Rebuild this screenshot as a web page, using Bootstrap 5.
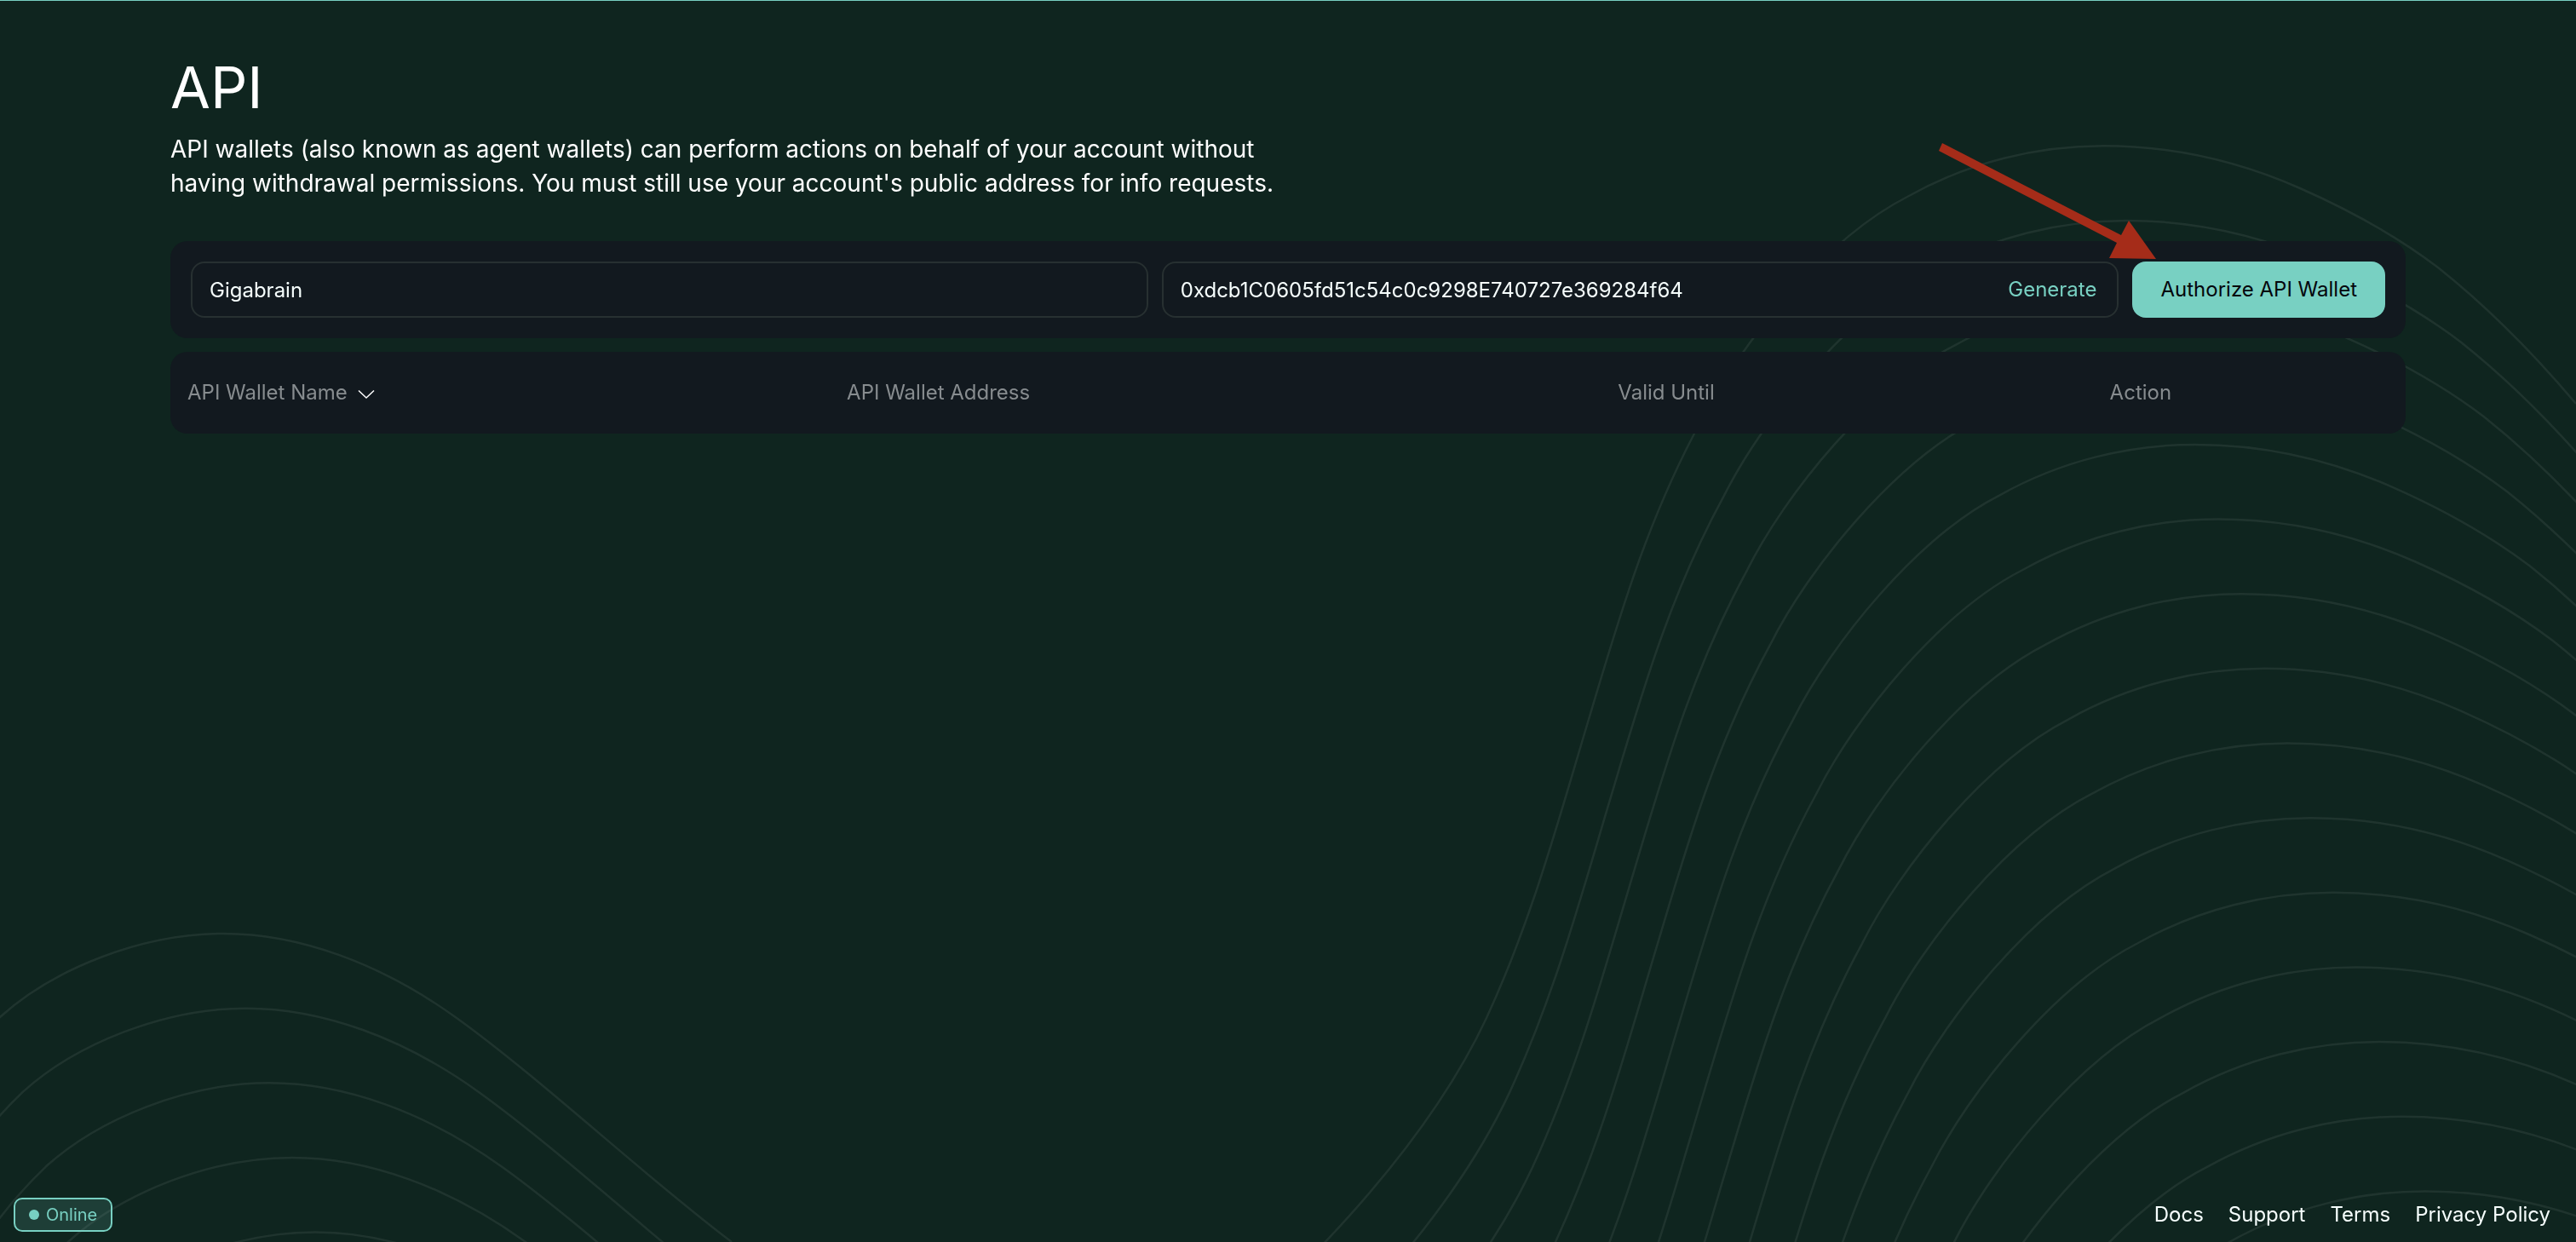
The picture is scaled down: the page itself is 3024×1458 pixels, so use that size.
<!DOCTYPE html>
<html lang="en">
<head>
<meta charset="utf-8">
<meta name="viewport" content="width=device-width, initial-scale=1">
<title>API</title>
<link href="https://cdn.jsdelivr.net/npm/bootstrap@5.3.0/dist/css/bootstrap.min.css" rel="stylesheet">
<style>
  :root { --mint: #78d0c2; --panel: #12191f; --ink: #f6fefd; --muted-ink: #878c8f; }
  body { background: #0f251f; color: #fff; font-family: Inter, "Liberation Sans", sans-serif; font-size: 24px; line-height: 32px; border-top: 1px solid var(--mint); }
  .backdrop { position: fixed; inset: 0; z-index: -1; }
  .page-main { padding: 60px 200px 0; }
  .page-title { font-size: 68px; line-height: 82px; font-weight: 400; margin-bottom: 12px; }
  .intro { font-size: 28px; line-height: 40px; max-width: 1312px; margin-bottom: 48px; }
  .panel { background: var(--panel); border-radius: 20px; }
  .wallet-form { padding: 24px; margin-bottom: 16px; }
  .field { height: 66px; border: 2px solid #273031; border-radius: 16px; padding: 0 20px; }
  .field input { background: transparent; border: 0; outline: 0; color: var(--ink); padding: 0; height: 100%; min-width: 0; }
  .generate { background: none; border: 0; color: var(--mint); padding: 0 4px; }
  .btn-authorize, .btn-authorize:hover { height: 66px; border: 0; border-radius: 16px; padding: 0 33px; background: var(--mint); color: #04060c; font-size: 24px; }
  .wallet-table { color: var(--muted-ink); table-layout: fixed; }
  .wallet-table th { font-weight: 400; padding: 32px 0 32px 20px; }
  .page-footer { padding: 0 30px 12px 16px; }
  .status { height: 40px; border: 2px solid var(--mint); border-radius: 10px; background: rgba(120, 208, 194, .15); color: var(--mint); padding: 0 16px; font-size: 20px; }
  .status-dot { width: 12px; height: 12px; background: var(--mint); }
  .footer-links { gap: 29px; }
  .footer-links a { color: var(--ink); text-decoration: none; }
  .callout-arrow { position: absolute; left: 0; bottom: 100%; width: 258px; height: 138px; margin: 0 0 2px -228px; pointer-events: none; }
</style>
<script src="https://cdn.jsdelivr.net/npm/bootstrap@5.3.0/dist/js/bootstrap.bundle.min.js"></script>
</head>
<body class="d-flex flex-column min-vh-100">

<svg class="backdrop w-100 h-100" viewBox="0 0 3024 1458" preserveAspectRatio="xMidYMid slice" fill="none" stroke="#fff" stroke-opacity=".07" stroke-width="2.5" aria-hidden="true">
  <defs>
    <path id="wave" d="M-60 1262C-42 1238-22 1215 0 1194C62 1138 165 1096 262 1096C350 1096 446 1130 536 1195C636 1267 759 1383 859 1458M1550 1464C1635 1375 1703 1285 1745 1195C1799 1078 1830 961 1865 844.500C1900 727.500 1933 611 1997 494C2042 404 2143 280 2239 231C2312 190 2392 171.300 2469 171.300C2546 171.300 2623 187 2700 221C2754 244.800 2808 273 2862 314C2916 357 2970 410 3024 474"/>
  </defs>
  <use href="#wave"/>
  <use href="#wave" x="27" y="87.650"/>
  <use href="#wave" x="54" y="175.300"/>
  <use href="#wave" x="81" y="262.950"/>
  <use href="#wave" x="108" y="350.600"/>
  <use href="#wave" x="135" y="438.250"/>
  <use href="#wave" x="162" y="525.900"/>
  <use href="#wave" x="189" y="613.550"/>
  <use href="#wave" x="216" y="701.200"/>
  <use href="#wave" x="243" y="788.850"/>
  <use href="#wave" x="270" y="876.500"/>
  <use href="#wave" x="297" y="964.150"/>
  <use href="#wave" x="324" y="1051.800"/>
  <use href="#wave" x="351" y="1139.450"/>
  <use href="#wave" x="378" y="1227.100"/>
</svg>

<main class="page-main">
  <h1 class="page-title">API</h1>
  <p class="intro">API wallets (also known as agent wallets) can perform actions on behalf of your account without having withdrawal permissions. You must still use your account's public address for info requests.</p>

  <form class="panel wallet-form d-flex gap-3">
    <div class="field d-flex align-items-center flex-fill w-50">
      <label for="wallet-name" class="visually-hidden">API wallet name</label>
      <input id="wallet-name" type="text" class="w-100" value="Gigabrain">
    </div>
    <div class="field d-flex align-items-center flex-fill w-50">
      <label for="wallet-address" class="visually-hidden">API wallet address</label>
      <input id="wallet-address" type="text" class="flex-grow-1" value="0xdcb1C0605fd51c54c0c9298E740727e369284f64">
      <button type="button" class="generate">Generate</button>
    </div>
    <div class="position-relative flex-shrink-0">
      <button type="submit" class="btn btn-authorize text-nowrap">Authorize API Wallet</button>
      <svg class="callout-arrow" viewBox="0 0 258 138" aria-hidden="true"><path fill="#a52c19" d="M5 1L215 109L224 92L256 137L201 136L210 118L1 10Z"/></svg>
    </div>
  </form>

  <div class="panel">
    <table class="wallet-table w-100">
      <colgroup><col style="width:29.500%"><col style="width:34.500%"><col style="width:22%"><col style="width:14%"></colgroup>
      <thead>
        <tr>
          <th scope="col">
            <span class="d-flex align-items-center gap-2">API Wallet Name
              <svg class="ms-1 mt-1" width="20" height="12" viewBox="0 0 20 12" fill="none" stroke="#fff" stroke-width="1.500" aria-hidden="true"><path d="M1 1.500L10 10L19 1.500"/></svg>
            </span>
          </th>
          <th scope="col">API Wallet Address</th>
          <th scope="col">Valid Until</th>
          <th scope="col">Action</th>
        </tr>
      </thead>
    </table>
  </div>
</main>

<footer class="page-footer d-flex justify-content-between align-items-center mt-auto">
  <div class="status d-flex align-items-center gap-2"><span class="status-dot rounded-circle"></span>Online</div>
  <nav class="footer-links d-flex">
    <a href="#">Docs</a>
    <a href="#">Support</a>
    <a href="#">Terms</a>
    <a href="#">Privacy Policy</a>
  </nav>
</footer>

</body>
</html>
